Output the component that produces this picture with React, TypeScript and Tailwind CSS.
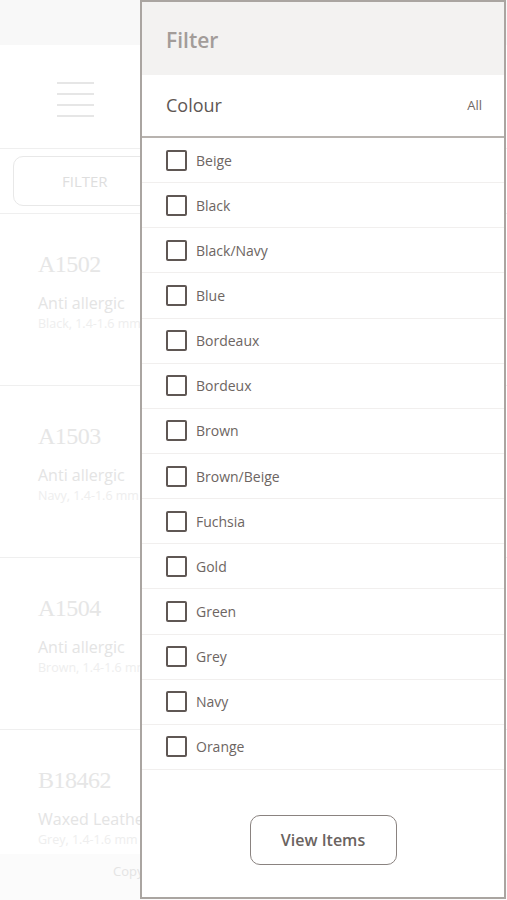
import React from "react";

const colours = [
  "Beige",
  "Black",
  "Black/Navy",
  "Blue",
  "Bordeaux",
  "Bordeux",
  "Brown",
  "Brown/Beige",
  "Fuchsia",
  "Gold",
  "Green",
  "Grey",
  "Navy",
  "Orange",
];

const products = [
  { code: "A1502", name: "Anti allergic", detail: "Black, 1.4-1.6 mm" },
  { code: "A1503", name: "Anti allergic", detail: "Navy, 1.4-1.6 mm" },
  { code: "A1504", name: "Anti allergic", detail: "Brown, 1.4-1.6 mm" },
  { code: "B18462", name: "Waxed Leather", detail: "Grey, 1.4-1.6 mm" },
];

export default function App() {
  return (
    <div
      className="relative w-[507px] h-[900px] overflow-hidden bg-white"
      style={{ fontFamily: '"Open Sans", "Liberation Sans", sans-serif' }}
    >
      {/* background page */}
      <div className="flex flex-col">
        <div className="h-[45px] bg-[#f8f8f8]" />
        <div className="h-[103px] flex items-center pl-[57px]">
          <div className="flex flex-col gap-[9px] w-[37px] mt-[6px]">
            <div className="h-[2px] bg-[#e6e6e6]" />
            <div className="h-[2px] bg-[#e6e6e6]" />
            <div className="h-[2px] bg-[#e6e6e6]" />
            <div className="h-[2px] bg-[#e6e6e6]" />
          </div>
        </div>
        <div className="border-t border-b border-[#efefef] h-[66px] px-[13px] flex items-center">
          <div className="w-[200px] h-[50px] rounded-[10px] border border-[#e8e8e8] flex items-center pl-[48px] text-[15px] text-[#dedede]">
            FILTER
          </div>
        </div>
        {products.map((p) => (
          <div key={p.code} className="h-[172px] border-b border-[#efefef] pl-[38px] pt-[34px]">
            <div
              className="text-[24px] leading-[32px] text-[#e6e6e6] tracking-[-0.5px]"
              style={{ fontFamily: '"Liberation Serif", serif' }}
            >
              {p.code}
            </div>
            <div className="mt-[12px] text-[16px] leading-[22px] text-[#e4e4e4]">{p.name}</div>
            <div className="text-[12.5px] leading-[20px] text-[#eeeeee]">{p.detail}</div>
          </div>
        ))}
      </div>
      <div className="absolute left-0 right-0 bottom-0 h-[46px] bg-[#fafafa]/80 flex items-center pl-[113px] pb-[10px] text-[13px] text-[#e4e4e4]">
        Copyright
      </div>

      {/* filter panel */}
      <div className="absolute left-[140px] top-0 w-[366px] h-[899px] border-2 border-[#aaa5a1] bg-white flex flex-col">
        <div className="h-[73px] bg-[#f3f2f1] flex items-center pl-[24px] pt-[4px] text-[21px] font-semibold text-[#a29c99]">
          Filter
        </div>
        <div className="h-[63px] border-b-2 border-[#b8b3af] flex items-center justify-between pl-[24px] pr-[22px]">
          <span className="text-[18px] text-[#5e5754]">Colour</span>
          <span className="text-[13px] text-[#6f6865]">All</span>
        </div>
        <div className="flex flex-col">
          {colours.map((c) => (
            <div key={c} className="h-[45.15px] border-b border-[#f1efee] flex items-center pl-[24px]">
              <div className="w-[21px] h-[21px] border-2 border-[#5f5754] rounded-[2px]" />
              <span className="ml-[9px] text-[14px] text-[#6d6562]">{c}</span>
            </div>
          ))}
        </div>
        <div className="flex justify-center mt-[45px]">
          <button className="w-[147px] h-[50px] rounded-[10px] border-[1.5px] border-[#8a8380] text-[16px] font-semibold text-[#6a6360]">
            View Items
          </button>
        </div>
      </div>
    </div>
  );
}
